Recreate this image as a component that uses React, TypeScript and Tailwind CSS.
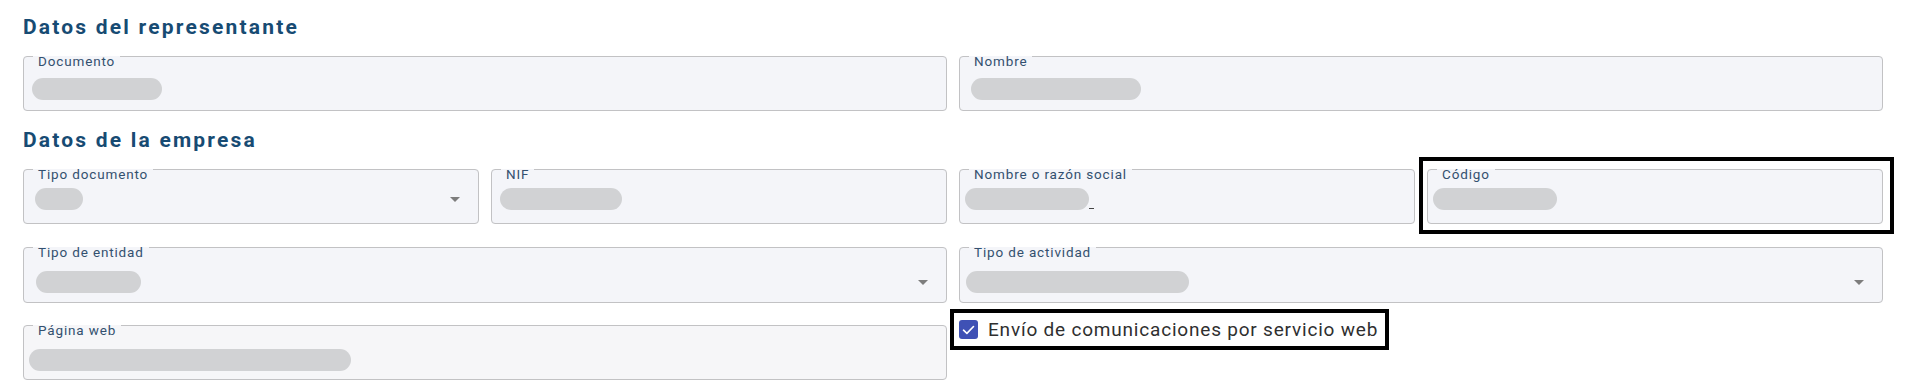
import React from 'react';

const font = { fontFamily: 'Roboto, "Liberation Sans", sans-serif' };

function Pill({ w, className = '' }: { w: string; className?: string }) {
  return <span className={`block h-[22px] rounded-full bg-[#d1d2d4] ${w} ${className}`} />;
}

function Arrow() {
  return (
    <svg width="10" height="5" viewBox="0 0 10 5" className="mr-[18px] shrink-0">
      <path d="M0 0h10L5 5z" fill="#7d7d7d" />
    </svg>
  );
}

function Field({
  label,
  children,
  select = false,
  top = 'pt-[13px]',
  bottom = 'pb-[10px]',
  bg = 'bg-[#f4f5f9]',
}: {
  label: string;
  children: React.ReactNode;
  select?: boolean;
  top?: string;
  bottom?: string;
  bg?: string;
}) {
  return (
    <fieldset className={`min-w-0 rounded-[4px] border border-[#c2c2c4] pl-[5px] ${bg}`}>
      <legend className="ml-[4px] px-[5px] pt-[9px] text-[13.5px] leading-[8px] tracking-[0.85px] text-[#33506f]">
        {label}
      </legend>
      <div className={`flex items-center justify-between ${top} ${bottom}`}>
        <div className="flex items-end">{children}</div>
        {select && <Arrow />}
      </div>
    </fieldset>
  );
}

function Heading({ children }: { children: React.ReactNode }) {
  return (
    <h2 className="text-[21px] font-bold leading-[25px] tracking-[2.2px] text-[#174b73]">{children}</h2>
  );
}

export default function App() {
  return (
    <div className="min-h-[384px] bg-white px-[23px] pt-[15px]" style={font}>
      <Heading>Datos del representante</Heading>
      <div className="mt-[8px] grid grid-cols-4 gap-x-[12px]">
        <div className="col-span-2">
          <Field label="Documento">
            <Pill w="w-[130px]" className="ml-[3px]" />
          </Field>
        </div>
        <div className="col-span-2">
          <Field label="Nombre">
            <Pill w="w-[170px]" className="ml-[6px]" />
          </Field>
        </div>
      </div>

      <div className="mt-[17px]">
        <Heading>Datos de la empresa</Heading>
      </div>

      <div className="mt-[8px] grid grid-cols-4 gap-x-[12px] gap-y-[15px]">
        <Field label="Tipo documento" select top="pt-[10px]" bottom="pb-[13px]">
          <Pill w="w-[48px]" className="ml-[6px]" />
        </Field>
        <Field label="NIF" top="pt-[10px]" bottom="pb-[13px]">
          <Pill w="w-[122px]" className="ml-[3px]" />
        </Field>
        <Field label="Nombre o razón social" top="pt-[10px]" bottom="pb-[13px]">
          <Pill w="w-[124px]" />
          <span className="mb-[1px] block h-[1px] w-[5px] bg-[#444]" />
        </Field>
        <div className="-mb-[10px] -ml-[8px] -mr-[11px] -mt-[4px] border-4 border-black pb-[6px] pl-[4px] pr-[7px]">
          <Field label="Código" top="pt-[10px]" bottom="pb-[13px]">
            <Pill w="w-[124px]" />
          </Field>
        </div>

        <div className="col-span-2">
          <Field label="Tipo de entidad" select top="pt-[15px]" bottom="pb-[9px]">
            <Pill w="w-[105px]" className="ml-[7px]" />
          </Field>
        </div>
        <div className="col-span-2">
          <Field label="Tipo de actividad" select top="pt-[15px]" bottom="pb-[9px]">
            <Pill w="w-[223px]" className="ml-[1px]" />
          </Field>
        </div>

        <div className="col-span-2 -mt-[1px]">
          <Field label="Página web" top="pt-[15px]" bottom="pb-[8px]" bg="bg-[#f6f6f8]">
            <Pill w="w-[322px]" />
          </Field>
        </div>
        <div className="col-span-2 -ml-[9px] -mt-[9px] self-start">
          <label className="flex w-fit items-center gap-[10px] border-4 border-black py-[5px] pl-[5px] pr-[7px]">
            <span className="flex h-[19px] w-[19px] items-center justify-center rounded-[3px] bg-[#3f51b5]">
              <svg width="13" height="10" viewBox="0 0 13 10" fill="none">
                <path d="M1.5 5.2l3.4 3.2L11.5 1.5" stroke="white" strokeWidth="1.6" strokeLinecap="round" strokeLinejoin="round" />
              </svg>
            </span>
            <span className="text-[19px] leading-[23px] tracking-[0.8px] text-[#2f2f2f]">
              Envío de comunicaciones por servicio web
            </span>
          </label>
        </div>
      </div>
    </div>
  );
}
